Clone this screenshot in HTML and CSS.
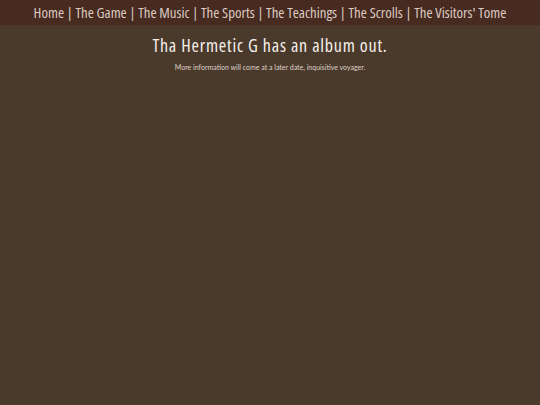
FILE: index.html
```html
<!DOCTYPE html>
<html>
<head>
<meta charset="utf-8">
<link rel="stylesheet" href="styles.css">
</head>
<body>
<nav class="topnav">
  <a href="#">Home</a> | <a href="#">The Game</a> | <a href="#">The Music</a> | <a href="#">The Sports</a> | <a href="#">The Teachings</a> | <a href="#">The Scrolls</a> | <a href="#">The Visitors' Tome</a>
</nav>
<main class="content">
  <h1 class="title">Tha Hermetic G has an album out.</h1>
  <p class="note">More information will come at a later date, inquisitive voyager.</p>
</main>
</body>
</html>
```
FILE: styles.css
```css
html, body {
  margin: 0;
  padding: 0;
  height: 100%;
  background: #4a3a2c;
}
body {
  font-family: "Lato", sans-serif;
  color: #e6d6cc;
}
.topnav {
  background: #472a20;
  height: 25px;
  line-height: 25px;
  text-align: center;
  font-family: "Open Sans", sans-serif;
  font-stretch: 75%;
  font-size: 14.8px;
  color: #dccac1;
  white-space: nowrap;
}
.topnav a {
  color: #dccac1;
  text-decoration: none;
}
.content {
  text-align: center;
}
.title {
  margin: 8px 0 0;
  font-family: "Open Sans", sans-serif;
  font-stretch: 87.5%;
  font-size: 18px;
  font-weight: 500;
  letter-spacing: 0.8px;
  line-height: 24px;
  color: #f6f0ea;
}
.note {
  margin: 6px 0 0;
  font-size: 7px;
  line-height: 9px;
  color: #ddd0c6;
}
```
